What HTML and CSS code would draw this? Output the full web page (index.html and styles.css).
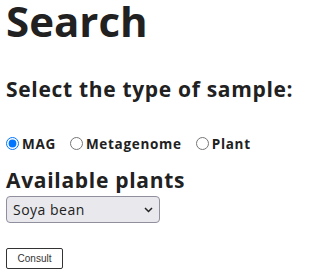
FILE: index.html
```html
<!DOCTYPE html>
<html lang="en">
<head>
<meta charset="utf-8">
<title>Search</title>
<link rel="stylesheet" href="styles.css">
</head>
<body>
<h1 class="title">Search</h1>
<h2 class="subtitle">Select the type of sample:</h2>
<div class="radios">
  <label class="radio"><input type="radio" name="type" checked><span>MAG</span></label>
  <label class="radio"><input type="radio" name="type"><span>Metagenome</span></label>
  <label class="radio"><input type="radio" name="type"><span>Plant</span></label>
</div>
<h2 class="section">Available plants</h2>
<div class="select-wrap">
  <select class="select"><option>Soya bean</option></select>
  <svg class="chevron" width="9" height="6" viewBox="0 0 9 6"><path d="M1 1l3.5 3.5L8 1" fill="none" stroke="#222" stroke-width="1.5"/></svg>
</div>
<div class="actions">
  <button class="btn" type="button">Consult</button>
</div>
</body>
</html>
```
FILE: styles.css
```css
html, body {
  margin: 0;
  background: #fff;
}
body {
  padding: 0 6px;
  font-family: "Open Sans", sans-serif;
  color: #212121;
}
.title {
  margin: 0;
  font-size: 42px;
  line-height: 42px;
  font-weight: 700;
}
.subtitle {
  margin: 37px 0 0;
  font-size: 21px;
  line-height: 21px;
  font-weight: 700;
  letter-spacing: 0.68px;
}
.radios {
  display: flex;
  align-items: center;
  gap: 14px;
  margin-top: 35px;
  height: 17px;
  font-size: 13.5px;
  font-weight: 700;
  letter-spacing: 0.7px;
}
.radio {
  display: flex;
  align-items: center;
  gap: 3px;
}
.radio input {
  margin: 0;
  width: 13px;
  height: 13px;
}
.section {
  margin: 18px 0 0;
  font-size: 21px;
  line-height: 21px;
  font-weight: 700;
  letter-spacing: 0.7px;
}
.select-wrap {
  position: relative;
  width: 154px;
  margin-top: 5px;
}
.select {
  appearance: none;
  -webkit-appearance: none;
  display: block;
  width: 154px;
  height: 27px;
  margin: 0;
  padding: 0 6px;
  border: 1px solid #8f8f9d;
  border-radius: 4px;
  background: #e9e9ed;
  font-family: "Open Sans", sans-serif;
  font-size: 14px;
  letter-spacing: 0.5px;
  color: #212121;
}
.chevron {
  position: absolute;
  right: 7px;
  top: 11px;
}
.actions {
  margin-top: 25px;
}
.btn {
  display: block;
  width: 57px;
  height: 21px;
  margin: 0;
  padding: 0;
  border: 1px solid #333;
  border-radius: 2px;
  background: #fff;
  font-family: "Liberation Sans", Arial, sans-serif;
  font-size: 10px;
  color: #333;
}
```
